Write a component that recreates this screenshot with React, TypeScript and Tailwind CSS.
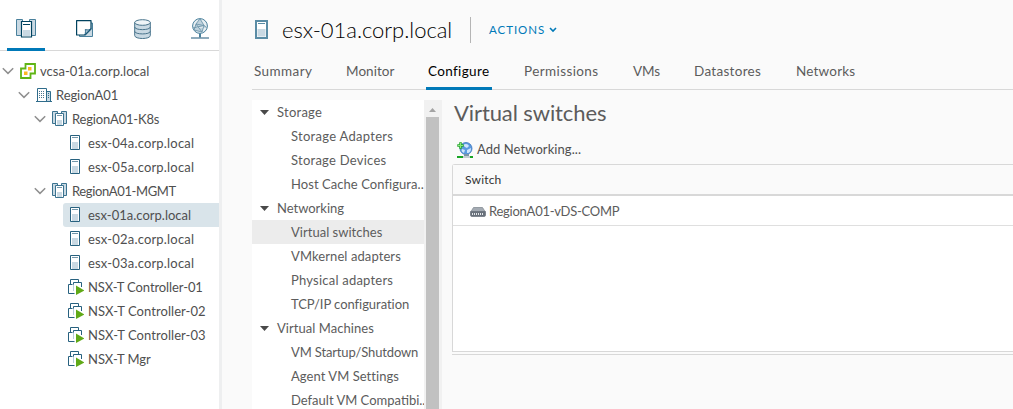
import React from "react";

type IconProps = { className?: string };

const Chevron = () => (
  <svg width="12" height="8" viewBox="0 0 12 8" className="shrink-0" fill="none" stroke="#8f8f8f" strokeWidth="1.5">
    <path d="M.8 1.2 6 6.4 11.2 1.2" />
  </svg>
);

const Cluster = ({ className = "size-4" }: IconProps) => (
  <svg viewBox="0 0 16 16" className={className} fill="#c9d9e3" stroke="#3b7390">
    <path d="M.5 .5h5v12h-5zM9.500 .5h5v12h-5z" />
    <path d="M3.500 2.500h8v12h-8z" fill="#fff" stroke="#3b7390" />
    <path d="M5 4.500h5" stroke="#7598ab" />
    <path d="M5 9h5v5H5z" stroke="none" />
  </svg>
);

const BigCluster = () => (
  <svg width="20" height="20" viewBox="0 0 20 20" fill="#c9d9e3" stroke="#49809c">
    <path d="M.5 1.5h6v16h-6zM13.5 1.5h6v16h-6z" />
    <path d="M5.500 3.500h10v15.500h-10z" fill="#fff" stroke="#00425f" strokeWidth="1.2" />
    <path d="M7 6.500h7" stroke="#00425f" />
    <path d="M7 12h7v6H7z" stroke="none" />
  </svg>
);

const Notes = () => (
  <svg width="18" height="18" viewBox="0 0 18 18">
    <path d="M3.500 3h13v13.500h-13z" fill="#c9d9e3" stroke="#49809c" />
    <path d="M.6.6h14.400v8.400L9 15H.6z" fill="#fff" stroke="#00425f" strokeWidth="1.200" strokeLinejoin="round" />
    <path d="M8.500 15c1.500-1.500.8-5.500.8-5.500 2.500.8 4.500.3 5.700-1z" fill="#a9c3d1" stroke="#1f5f82" strokeWidth=".9" />
  </svg>
);

const Database = () => (
  <svg width="17" height="20" viewBox="0 0 17 20" fill="#c9d9e3" stroke="#49748c">
    <path d="M.7 3.500v13c0 4 15.600 4 15.600 0v-13z" />
    <ellipse cx="8.500" cy="3.500" rx="7.800" ry="2.800" fill="#eef4f7" />
    <path d="M.7 8c0 3.500 15.600 3.500 15.600 0M.7 12.300c0 3.500 15.600 3.500 15.600 0" fill="none" />
  </svg>
);

const Globe = () => (
  <svg width="18" height="22" viewBox="0 0 18 22" fill="none" stroke="#49809c">
    <circle cx="9" cy="8" r="7.400" fill="#e6eef2" />
    <path d="M9 .7 5 6l8 1.500zM5 6 3 12l8 2 2-6.500M2 10l11-2.500 2.500 2M5 6l6 8" fill="#bfd2dd" stroke="#6d95aa" strokeWidth=".9" />
    <path d="M9 15.500V20" strokeWidth="2" />
    <path d="M0 20h18" stroke="#7396ab" strokeWidth="1.600" />
  </svg>
);

const VCenter = () => (
  <svg width="16" height="16" viewBox="0 0 16 16" fill="none">
    <path d="M5.500 1h9.500v9.500h-4.500V15H1V5.500h4.500z" stroke="#60b515" strokeWidth="1.800" />
    <path d="M8 4h3.500v3.500H8zM4 8.500h3.500V12H4z" fill="#fdb822" />
  </svg>
);

const Datacenter = () => (
  <svg width="16" height="16" viewBox="0 0 16 16" fill="#fff" stroke="#2f6c8b">
    <path d="M10.500 4.500h4v10h-4z" fill="#c9d9e3" />
    <path d="M1.500 1.500h9v13h-9z" />
    <path d="M0 14.500h16" />
    <path d="M3 4.500h6M3 6.500h6M3 8.500h6M3 10.500h6" strokeDasharray="1 1" stroke="#49748c" />
    <path d="M12 6.500h1M12 8.500h1M12 10.500h1" />
  </svg>
);

const Host = () => (
  <svg width="16" height="16" viewBox="0 0 16 16">
    <path d="M2.500.5h9v14h-9z" fill="#fff" stroke="#27617f" />
    <path d="M4 2.500h6" stroke="#7598ab" />
    <path d="M4 7h6v7H4z" fill="#c9d9e3" />
  </svg>
);

const BigHost = () => (
  <svg width="13" height="19" viewBox="0 0 13 19">
    <path d="M1 1h11v17H1z" fill="#fff" stroke="#5a8ca5" strokeWidth="2" />
    <path d="M3 3.500h7" stroke="#5a8ca5" />
    <path d="M2.500 9h8v7.500h-8z" fill="#c9d9e3" />
  </svg>
);

const RunningVm = () => (
  <svg width="16" height="16" viewBox="0 0 16 16" fill="none">
    <path d="M2.500 5V.5h8v3" stroke="#27617f" />
    <path d="M5.500 12V3.500" stroke="#b9cfdb" />
    <path d="M6.500 14.500h-6v-9h4M5.500 5.500v-2h8V8" stroke="#27617f" />
    <path d="M8 6.500 16.500 11.500 8 16z" fill="#60a917" />
  </svg>
);

const AddNetwork = () => (
  <svg width="16" height="16" viewBox="0 0 16 16">
    <circle cx="9" cy="6.500" r="6" fill="#5b9be0" stroke="#3a72bd" strokeWidth=".8" />
    <path d="M6 3c3-2 5-1 6 1L10 6 8 5zM10 8l4-2c0 3-1 5-4 5zM5 7l3 1-1 3C5 10 4 9 5 7z" fill="#cfe5fb" />
    <path d="M7 12h5v2H7z" fill="#7b95a8" />
    <path d="M0 14h16v2H0z" fill="#19a526" />
    <path d="M6 14h7v2H6z" fill="#c4cdd3" />
    <path d="M3.500.3v6.400M.3 3.500h6.400" stroke="#21a52b" strokeWidth="2.600" />
    <path d="M3.500 1v5M1 3.500h5" stroke="#8be77c" strokeWidth="1.200" />
  </svg>
);

const SwitchIcon = () => (
  <svg width="16" height="10" viewBox="0 0 16 10">
    <path d="M3.500.5h9L15 4.500H1z" fill="#a4abb3" stroke="#858d96" strokeWidth=".8" />
    <path d="M.5 4.500h15v3.500q0 1.500-1.500 1.500H2Q.5 9.500.5 8z" fill="#69717b" stroke="#69717b" strokeWidth=".7" />
    <path d="M2 7h12" stroke="#e4e7ea" strokeWidth="2" strokeDasharray="1 1" />
  </svg>
);

type TreeNode = { label: string; level: number; icon: React.ReactNode; tracking: string; open?: boolean; selected?: boolean };

const tree: TreeNode[] = [
  { label: "vcsa-01a.corp.local", level: 0, icon: <VCenter />, tracking: "tracking-[0.02px]", open: true },
  { label: "RegionA01", level: 1, icon: <Datacenter />, tracking: "tracking-[-0.08px]", open: true },
  { label: "RegionA01-K8s", level: 2, icon: <Cluster />, tracking: "tracking-[-0.18px]", open: true },
  { label: "esx-04a.corp.local", level: 3, icon: <Host />, tracking: "tracking-[0.18px]" },
  { label: "esx-05a.corp.local", level: 3, icon: <Host />, tracking: "tracking-[0.18px]" },
  { label: "RegionA01-MGMT", level: 2, icon: <Cluster />, tracking: "tracking-[-0.38px]", open: true },
  { label: "esx-01a.corp.local", level: 3, icon: <Host />, tracking: "tracking-[0.01px]", selected: true },
  { label: "esx-02a.corp.local", level: 3, icon: <Host />, tracking: "tracking-[0.18px]" },
  { label: "esx-03a.corp.local", level: 3, icon: <Host />, tracking: "tracking-[0.18px]" },
  { label: "NSX-T Controller-01", level: 3, icon: <RunningVm />, tracking: "tracking-[-0.1px]" },
  { label: "NSX-T Controller-02", level: 3, icon: <RunningVm />, tracking: "tracking-[0.05px]" },
  { label: "NSX-T Controller-03", level: 3, icon: <RunningVm />, tracking: "tracking-[0.05px]" },
  { label: "NSX-T Mgr", level: 3, icon: <RunningVm />, tracking: "tracking-[-0.05px]" },
];

const indents = ["pl-0.5", "pl-[18px]", "pl-[34px]", "pl-[63px]"];

const tabs = [
  { label: "Summary", width: "w-[92px]", tracking: "tracking-[0.4px]" },
  { label: "Monitor", width: "w-[82px]", tracking: "tracking-[0.05px]" },
  { label: "Configure", width: "w-[96px]", tracking: "tracking-[0.35px]", active: true },
  { label: "Permissions", width: "w-[109px]", tracking: "tracking-[0.4px]" },
  { label: "VMs", width: "w-[61px]", tracking: "tracking-[-0.1px]" },
  { label: "Datastores", width: "w-[102px]", tracking: "tracking-[0.3px]" },
  { label: "Networks", width: "w-[62px]", tracking: "tracking-[0.2px]" },
];

const sections = [
  {
    title: "Storage",
    tracking: "tracking-[0.25px]",
    items: [
      { label: "Storage Adapters", tracking: "tracking-[0.28px]" },
      { label: "Storage Devices", tracking: "tracking-[0.25px]" },
      { label: "Host Cache Configura..", tracking: "tracking-[0.06px]" },
    ],
  },
  {
    title: "Networking",
    tracking: "tracking-[-0.02px]",
    items: [
      { label: "Virtual switches", tracking: "tracking-[0.02px]" },
      { label: "VMkernel adapters", tracking: "tracking-[0.09px]" },
      { label: "Physical adapters", tracking: "tracking-[0.22px]" },
      { label: "TCP/IP configuration", tracking: "tracking-[-0.05px]" },
    ],
  },
  {
    title: "Virtual Machines",
    tracking: "tracking-[0.05px]",
    items: [
      { label: "VM Startup/Shutdown", tracking: "tracking-[-0.14px]" },
      { label: "Agent VM Settings", tracking: "tracking-[0.05px]" },
      { label: "Default VM Compatibi..", tracking: "tracking-[0px]" },
    ],
  },
];

function Sidebar() {
  return (
    <aside className="flex w-[222px] shrink-0 flex-col border-r-[3px] border-[#eeeff0] bg-white">
      <nav className="flex h-[51px] shrink-0 border-b border-[#d8d8d8]">
        <div className="ml-[7px] flex h-[51px] w-[38px] justify-center border-b-[3px] border-[#0079b8] pt-[18px]"><BigCluster /></div>
        <div className="ml-[31px] pt-5"><Notes /></div>
        <div className="ml-10 pt-[19px]"><Database /></div>
        <div className="ml-10 pt-[18px]"><Globe /></div>
      </nav>
      <div className="pt-2">
        {tree.map((n) => (
          <div key={n.label} className={`flex h-6 items-center whitespace-nowrap ${indents[n.level]}`}>
            {n.open && <Chevron />}
            <div className={`flex h-6 items-center ${n.level === 3 ? "grow rounded-l-[3px] pl-[5px]" : "pl-1.5"} ${n.selected ? "bg-[#d9e4ea]" : ""}`}>
              <span className="flex size-4 shrink-0">{n.icon}</span>
              <span className={`pl-1 ${n.tracking}`}>{n.label}</span>
            </div>
          </div>
        ))}
      </div>
    </aside>
  );
}

function SettingsNav() {
  return (
    <div className="flex w-[190px] shrink-0">
      <div className="w-[172px] bg-white text-[#5c5c5c]">
        {sections.map((s) => (
          <div key={s.title}>
            <div className="flex h-6 items-center pl-2">
              <svg width="9" height="5" viewBox="0 0 9 5"><path d="M0 0h9L4.500 5z" fill="#4a4a4a" /></svg>
              <span className={`pl-2 ${s.tracking}`}>{s.title}</span>
            </div>
            {s.items.map((item) => (
              <div key={item.label} className={`flex h-6 items-center pl-[39px] whitespace-nowrap ${item.tracking} ${item.label === "Virtual switches" ? "bg-[#ececec]" : ""}`}>{item.label}</div>
            ))}
          </div>
        ))}
      </div>
      <div className="flex w-[18px] flex-col items-center bg-[#f1f1f1] pr-px">
        <div className="flex h-[17px] shrink-0 items-center pt-0.5">
          <svg width="7" height="4" viewBox="0 0 7 4"><path d="M0 4h7L3.500 0z" fill="#a3a3a3" /></svg>
        </div>
        <div className="w-[13px] grow bg-[#c1c1c1]" />
      </div>
    </div>
  );
}

export default function App() {
  return (
    <div className="flex h-[409px] w-[1013px] overflow-hidden bg-[#fafafa] font-['Lato','Liberation_Sans',sans-serif] text-[13px] leading-6 text-[#4f4f4f]">
      <Sidebar />
      <main className="flex min-w-0 grow flex-col pl-[30px]">
        <header className="flex h-[61px] shrink-0 items-center pb-[2px] pl-[3px]">
          <BigHost />
          <h1 className="w-[202px] pl-3.5 text-[22px] font-light tracking-[-0.03px] whitespace-nowrap text-black">esx-01a.corp.local</h1>
          <div className="h-[26px] w-px bg-[#b5b5b5]" />
          <button className="flex items-center gap-1 pl-[18px] text-[11.500px] tracking-[0.95px] text-[#0079b8]">
            ACTIONS
            <svg width="8" height="6" viewBox="0 0 8 6" fill="none" stroke="#0079b8" strokeWidth="1.600"><path d="m1 1 3 3 3-3" /></svg>
          </button>
        </header>
        <nav className="flex h-[29px] shrink-0 border-b border-[#d8d8d8] pl-0.5 text-[#5c5c5c]">
          {tabs.map((t) => (
            <div key={t.label} className={`h-[29px] ${t.width} text-[13.500px] leading-[21px] ${t.tracking}`}>
              <div className={t.active ? "-ml-0.5 h-[29px] w-[66px] border-b-[3px] border-[#0079b8] pl-0.5 text-black" : ""}>{t.label}</div>
            </div>
          ))}
        </nav>
        <div className="flex min-h-0 grow pt-2.5">
          <SettingsNav />
          <section className="min-w-0 grow pl-2.5">
            <h2 className="pl-[2px] text-[22px] leading-[26px] tracking-[-0.1px] text-[#5c5c5c]">Virtual switches</h2>
            <div className="flex h-[38px] items-center pt-[9px] pl-[5px]">
              <AddNetwork />
              <span className="mt-[-2px] pl-1 tracking-[0.07px]">Add Networking...</span>
            </div>
            <div className="h-[188px] rounded-tl-[3px] border-t border-b border-l border-[#d8d8d8] bg-white">
              <div className="h-[31px] border-b-2 border-[#d8d8d8] bg-[#fafafa] pl-3 text-xs leading-[29px] tracking-[0.2px] text-[#333]">Switch</div>
              <div className="flex h-[30px] items-center border-b border-[#dfdfdf] pl-[17px]">
                <span className="pt-0.5"><SwitchIcon /></span>
                <span className="pl-[3px] tracking-[-0.25px] text-[#5c5c5c]">RegionA01-vDS-COMP</span>
              </div>
            </div>
            <div className="mt-0.5 h-px bg-[#d8d8d8]" />
          </section>
        </div>
      </main>
    </div>
  );
}
